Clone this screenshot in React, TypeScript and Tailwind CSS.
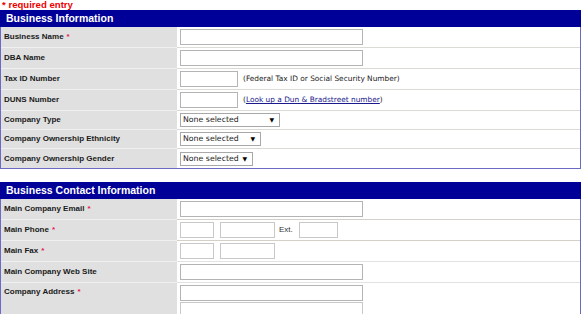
import React from "react";

const Req = () => <span className="text-[#e8174f] ml-[3px]">*</span>;

const Input = ({ w, light }: { w: number; light?: boolean }) => (
  <div
    className={`h-[16px] bg-white border ${light ? "border-[#c8c8c8]" : "border-[#b4b4b4]"} shrink-0`}
    style={{ width: w }}
  />
);

const Select = ({ w }: { w: number }) => (
  <div
    className="h-[14px] bg-white border border-[#a8a8a8] flex items-center justify-between pl-[2px] pr-[5px] shrink-0 font-['DejaVu_Sans',Verdana,sans-serif] text-[7.8px] text-[#222]"
    style={{ width: w }}
  >
    <span>None selected</span>
    <span className="text-[6px] leading-none text-black">▼</span>
  </div>
);

type RowProps = {
  label: string;
  req?: boolean;
  children?: React.ReactNode;
  h?: string;
  last?: boolean;
  top?: boolean;
  line?: string;
};

const Row = ({ label, req, children, h = "h-[21px]", last, top, line = "border-[#dcdad6]" }: RowProps) => (
  <div className={`grid grid-cols-[176px_1fr] ${h}`}>
    <div
      className={`bg-[#e0e0e0] pl-[3px] font-bold text-[8px] text-[#1a1a1a] flex ${top ? "items-start pt-[3px]" : "items-center"} ${last ? "" : "border-b border-[#f0f0f0]"}`}
    >
      <span>
        {label}
        {req && <Req />}
      </span>
    </div>
    <div
      className={`pl-[3px] flex ${top ? "flex-col items-start pt-[2px] gap-[1px]" : "items-center"} ${last ? "" : `border-b ${line}`}`}
    >
      {children}
    </div>
  </div>
);

const Section = ({ title, children }: { title: string; children: React.ReactNode }) => (
  <div className="w-[581px]">
    <div className="h-[17px] bg-[#000099] text-white font-bold text-[10.5px] pl-[6px] flex items-center">
      {title}
    </div>
    <div className="border-x border-b border-[#6b6bc4]">{children}</div>
  </div>
);

const Small = ({ children }: { children: React.ReactNode }) => (
  <span className="ml-[5px] font-['DejaVu_Sans',Verdana,sans-serif] text-[7.4px] text-[#222]">{children}</span>
);

export default function App() {
  return (
    <div className="w-[585px] h-[314px] overflow-hidden bg-white font-['Liberation_Sans',Arial,sans-serif]">
      <div className="h-[10px] pl-[2px] text-[9.6px] leading-[10px] font-bold text-[#ee0000]">* required entry</div>
      <Section title="Business Information">
        <Row label="Business Name" req>
          <Input w={183} />
        </Row>
        <Row label="DBA Name">
          <Input w={183} />
        </Row>
        <Row label="Tax ID Number">
          <Input w={58} />
          <Small>(Federal Tax ID or Social Security Number)</Small>
        </Row>
        <Row label="DUNS Number">
          <Input w={58} />
          <Small>
            (<span className="underline text-[#1a1a8c]">Look up a Dun &amp; Bradstreet number</span>)
          </Small>
        </Row>
        <Row label="Company Type" h="h-[19px]">
          <Select w={100} />
        </Row>
        <Row label="Company Ownership Ethnicity" h="h-[19px]">
          <Select w={81} />
        </Row>
        <Row label="Company Ownership Gender" h="h-[19px]" last>
          <Select w={73} />
        </Row>
      </Section>
      <div className="mt-[13px]">
        <Section title="Business Contact Information">
          <Row label="Main Company Email" req line="border-[#d4d0c8]">
            <Input w={183} />
          </Row>
          <Row label="Main Phone" req line="border-[#d4d0c8]">
            <Input w={34} light />
            <div className="w-[6px]" />
            <Input w={55} light />
            <span className="ml-[4px] mr-[6px] text-[8px] text-[#333]">Ext.</span>
            <Input w={39} light />
          </Row>
          <Row label="Main Fax" req line="border-[#e2e2e2]">
            <Input w={34} light />
            <div className="w-[6px]" />
            <Input w={55} light />
          </Row>
          <Row label="Main Company Web Site" line="border-[#e2e2e2]">
            <Input w={183} />
          </Row>
          <Row label="Company Address" req h="h-[60px]" top last>
            <Input w={183} />
            <Input w={183} light />
          </Row>
        </Section>
      </div>
    </div>
  );
}
